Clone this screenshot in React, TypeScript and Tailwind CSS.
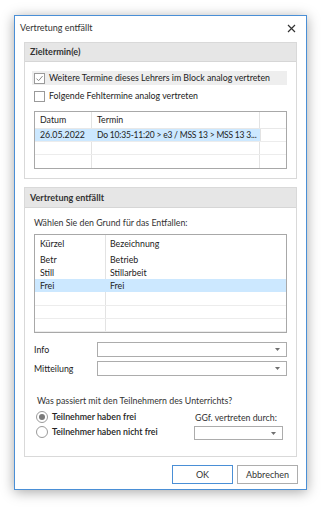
import React from 'react';

const font = { fontFamily: 'Lato, "Noto Sans", Arial, sans-serif' };

function CheckBox({ checked }: { checked?: boolean }) {
  return (
    <span className="flex h-[11px] w-[11px] shrink-0 items-center justify-center border border-[#9a9a9a] bg-white">
      {checked && (
        <svg width="9" height="9" viewBox="0 0 9 9">
          <path d="M1.5 4.6 L3.6 6.7 L7.6 2" fill="none" stroke="#8a8a8a" strokeWidth="1" />
        </svg>
      )}
    </span>
  );
}

function Radio({ checked }: { checked?: boolean }) {
  return (
    <span className="flex h-[12px] w-[12px] shrink-0 items-center justify-center rounded-full border border-[#9a9a9a] bg-white">
      {checked && <span className="h-[6px] w-[6px] rounded-full bg-[#7a7a7a]" />}
    </span>
  );
}

function Combo({ className }: { className: string }) {
  return (
    <div className={`flex items-center justify-end border border-[#acacac] bg-white pr-[6px] ${className}`}>
      <svg width="5" height="3" viewBox="0 0 5 3">
        <path d="M0 0 H5 L2.5 3 Z" fill="#707070" />
      </svg>
    </div>
  );
}

export default function App() {
  const reasons = [
    { k: 'Betr', b: 'Betrieb' },
    { k: 'Still', b: 'Stillarbeit' },
    { k: 'Frei', b: 'Frei', sel: true },
    { k: '', b: '' },
    { k: '', b: '' },
    { k: '', b: '' },
  ];

  return (
    <div className="h-[507px] w-[321px] whitespace-nowrap bg-white pl-[14px] pt-[15px] text-[8.8px] text-[#222]" style={font}>
      <div className="flex h-[475px] w-[293px] flex-col border border-[#4a8fd6] bg-white shadow-[0_2px_12px_rgba(0,0,0,0.35)]">
        {/* Title bar */}
        <div className="flex h-[26px] items-center justify-between pl-[5px] pr-[10px] pb-[2px]">
          <span className="text-[9px] text-[#333]">Vertretung entfällt</span>
          <svg width="9" height="9" viewBox="0 0 9 9">
            <path d="M1 1 L8 8 M8 1 L1 8" stroke="#333" strokeWidth="1.2" />
          </svg>
        </div>

        {/* Zieltermin(e) */}
        <div className="mx-[9px] flex h-[137px] flex-col border border-[#d9d9d9]">
          <div className="flex h-[19px] items-center border-b border-[#d6d6d6] bg-[#e6e6e6] pl-[5px] text-[9px] font-bold text-[#333]">
            Zieltermin(e)
          </div>
          <div className="flex flex-col pl-[7px] pr-[9px] pt-[9px]">
            <div className="flex h-[14px] items-center gap-[4px] bg-[#eeeeee] pl-[2px]">
              <CheckBox checked />
              <span>Weitere Termine dieses Lehrers im Block analog vertreten</span>
            </div>
            <div className="mt-[4px] flex h-[14px] items-center gap-[4px] pl-[2px]">
              <CheckBox />
              <span>Folgende Fehltermine analog vertreten</span>
            </div>
            <div className="ml-[2px] mt-[8px] flex h-[58px] flex-col border border-[#a8a8a8]">
              <div className="flex h-[17px] border-b border-[#e8e8e8]">
                <div className="flex w-[57px] items-center border-r border-[#e3e3e3] pl-[5px]">Datum</div>
                <div className="flex w-[168px] items-center border-r border-[#e3e3e3] pl-[5px]">Termin</div>
                <div className="flex-1" />
              </div>
              <div className="flex h-[13px] border-b border-[#ececec]">
                <div className="flex w-[57px] items-center bg-[#cce8ff] pl-[5px]">26.05.2022</div>
                <div className="flex w-[168px] items-center bg-[#cce8ff] pl-[5px] text-[8.5px] tracking-[-0.2px]">Do 10:35-11:20 &gt; e3 / MSS 13 &gt; MSS 13 3...</div>
                <div className="flex-1 border-l border-[#e3e3e3]" />
              </div>
              <div className="flex h-[13px] border-b border-[#ececec]">
                <div className="w-[57px] border-r border-[#e3e3e3]" />
                <div className="w-[168px] border-r border-[#e3e3e3]" />
                <div className="flex-1" />
              </div>
              <div className="flex flex-1">
                <div className="w-[57px] border-r border-[#e3e3e3]" />
                <div className="w-[168px] border-r border-[#e3e3e3]" />
                <div className="flex-1" />
              </div>
            </div>
          </div>
        </div>

        {/* Vertretung entfällt */}
        <div className="mx-[9px] mt-[8px] flex h-[270px] flex-col border border-[#d9d9d9]">
          <div className="flex h-[20px] items-center border-b border-[#d6d6d6] bg-[#e6e6e6] pl-[5px] text-[9px] font-bold text-[#333]">
            Vertretung entfällt
          </div>
          <div className="flex flex-col pl-[9px] pr-[9px]">
            <div className="mt-[9px] h-[12px] leading-[12px] text-[#333]">Wählen Sie den Grund für das Entfallen:</div>
            <div className="mt-[5px] flex h-[99px] flex-col border border-[#a8a8a8]">
              <div className="flex h-[18px]">
                <div className="flex w-[71px] items-center border-r border-[#e3e3e3] pl-[5px]">Kürzel</div>
                <div className="flex flex-1 items-center pl-[4px]">Bezeichnung</div>
              </div>
              {reasons.map((r, i) => (
                <div
                  key={i}
                  className={`flex h-[13.4px] ${r.sel ? 'bg-[#cce8ff]' : ''} ${i >= 3 ? 'border-b border-[#ececec]' : ''}`}
                >
                  <div className={`flex w-[71px] items-center pl-[5px] ${r.sel ? '' : 'border-r border-[#e3e3e3]'}`}>{r.k}</div>
                  <div className="flex flex-1 items-center pl-[4px]">{r.b}</div>
                </div>
              ))}
            </div>

            <div className="mt-[9px] flex h-[15px] items-center">
              <span className="w-[63px]">Info</span>
              <Combo className="h-[15px] w-[191px]" />
            </div>
            <div className="mt-[4px] flex h-[15px] items-center">
              <span className="w-[63px]">Mitteilung</span>
              <Combo className="h-[15px] w-[191px]" />
            </div>

            <div className="mt-[19px] pl-[3px] leading-[12px] text-[#333]">
              Was passiert mit den Teilnehmern des Unterrichts?
            </div>
            <div className="mt-[4px] flex">
              <div className="flex w-[160px] flex-col gap-[3px] pl-[2px]">
                <div className="flex h-[12px] items-center gap-[4px] font-semibold">
                  <Radio checked />
                  <span>Teilnehmer haben frei</span>
                </div>
                <div className="flex h-[12px] items-center gap-[4px] font-semibold">
                  <Radio />
                  <span>Teilnehmer haben nicht frei</span>
                </div>
              </div>
              <div className="flex flex-col pt-[1px]">
                <span className="h-[12px] pl-[1px] leading-[12px] text-[#333]">GGf. vertreten durch:</span>
                <Combo className="mt-[2px] h-[14px] w-[89px]" />
              </div>
            </div>
          </div>
        </div>

        {/* Buttons */}
        <div className="mt-[8px] flex justify-end gap-[4px] pr-[8px]">
          <button className="h-[19px] w-[61px] border border-[#4a8fd6] bg-white text-[9px] text-[#333]">OK</button>
          <button className="h-[19px] w-[61px] border border-[#adadad] bg-white text-[9px] text-[#333]">Abbrechen</button>
        </div>
      </div>
    </div>
  );
}
